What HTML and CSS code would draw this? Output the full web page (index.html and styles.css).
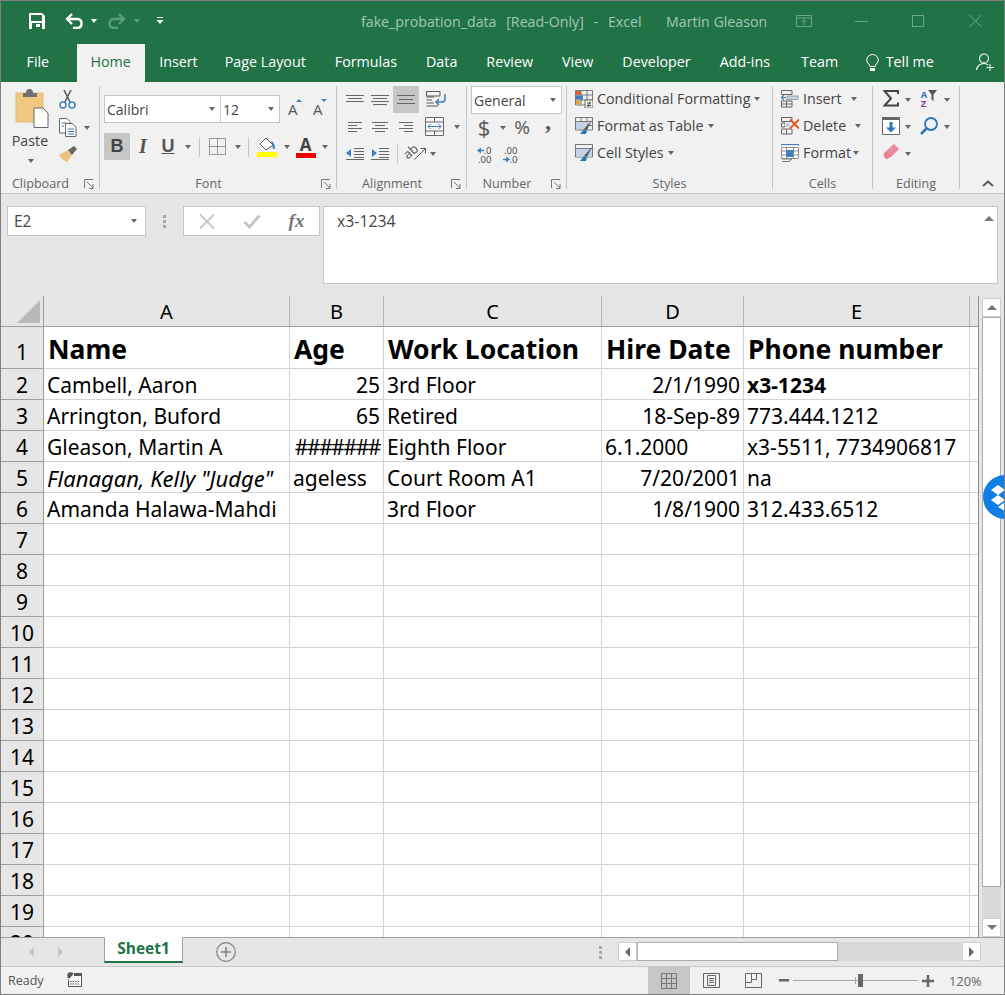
FILE: index.html
```html
<!DOCTYPE html>
<html lang="en">
<head>
<meta charset="utf-8">
<title>fake_probation_data - Excel</title>
<link rel="stylesheet" href="styles.css">
</head>
<body>
<div class="window">
  <header class="titlebar">
    <svg class="qat-save" width="16" height="16" viewBox="0 0 16 16"><path d="M0 0H13L16 3V16H0Z" fill="#fff"/><rect x="2" y="2" width="11" height="6" fill="#217346"/><rect x="3" y="10" width="10" height="6" fill="#217346"/><rect x="7" y="11" width="4" height="3" fill="#fff"/></svg>
    <svg class="qat-undo" width="18" height="16" viewBox="0 0 18 16"><path d="M7 1L2 6L7 11M2 6H12C15 6 16.500 8 16.500 10.500S15 15 12 15H8" fill="none" stroke="#fff" stroke-width="2.400"/></svg>
    <i class="arr arr-w qat-a1"></i>
    <svg class="qat-redo" width="18" height="16" viewBox="0 0 18 16"><path d="M11 1L16 6L11 11M16 6H6C3 6 1.500 8 1.500 10.500S3 15 6 15H10" fill="none" stroke="#5c9a7b" stroke-width="2.400"/></svg>
    <i class="arr arr-f qat-a2"></i>
    <svg class="qat-more" width="8" height="8" viewBox="0 0 8 8"><path d="M1 0.500H7" stroke="#fff"/><path d="M0.500 3H7.500L4 7Z" fill="#fff"/></svg>
    <span class="doc-title">fake_probation_data&nbsp; [Read-Only]&nbsp; -&nbsp; Excel</span>
    <span class="user">Martin Gleason</span>
    <svg class="win-display" width="16" height="12" viewBox="0 0 16 12"><path d="M.5.500H15.500V11.500H.5ZM.5 3H15.500M8 10V5M5.500 7L8 4.500L10.500 7" fill="none" stroke="#6ea58a"/></svg>
    <svg class="win-min" width="13" height="1" viewBox="0 0 13 1"><rect width="13" height="1" fill="#6ea58a"/></svg>
    <svg class="win-max" width="12" height="12" viewBox="0 0 12 12"><rect x=".5" y=".5" width="11" height="11" fill="none" stroke="#6ea58a"/></svg>
    <svg class="win-close" width="13" height="12" viewBox="0 0 13 12"><path d="M.5 0L12.500 12M12.500 0L.5 12" stroke="#6ea58a"/></svg>
  </header>

  <nav class="tabs">
    <span class="tab">File</span>
    <span class="tab tab-on">Home</span>
    <span class="tab tab-narrow">Insert</span>
    <span class="tab">Page Layout</span>
    <span class="tab">Formulas</span>
    <span class="tab">Data</span>
    <span class="tab">Review</span>
    <span class="tab">View</span>
    <span class="tab">Developer</span>
    <span class="tab tab-wide">Add-ins</span>
    <span class="tab">Team</span>
    <svg class="bulb" width="13" height="18" viewBox="0 0 13 18"><path d="M4 12.500C3.500 10 .7 9 .7 6A5.800 5.500 0 0 1 12.300 6C12.300 9 9.500 10 9 12.500Z" fill="none" stroke="#fff"/><rect x="4" y="14" width="5" height="3" fill="#fff"/></svg>
    <span class="tell">Tell me</span>
    <svg class="person" width="19" height="19" viewBox="0 0 19 19"><circle cx="8" cy="5.500" r="4.500" fill="none" stroke="#fff" stroke-width="1.200"/><path d="M.5 17C1.500 12 4 10.500 8 10.500C9.500 10.500 11 11 12 12" fill="none" stroke="#fff" stroke-width="1.200"/><path d="M14 11V18M10.500 14.500H18" stroke="#fff"/></svg>
  </nav>

  <section class="ribbon">
    <div class="group g-clip">
      <div class="body clip-body">
        <div class="paste">
          <svg width="35" height="40" viewBox="0 0 35 40"><path d="M2 4H29V33H2Z" fill="#efc882" stroke="#e8bd75"/><path d="M9 4H12C12 1 13 0 15.500 0S19 1 19 4H23V8H9Z" fill="#707070"/><path d="M20 19H29L34 24V38.500H20Z" fill="#fff" stroke="#666"/></svg>
          <span class="paste-t">Paste</span>
          <i class="arr"></i>
        </div>
        <div class="clip-small">
          <svg width="17" height="19" viewBox="0 0 17 19"><path d="M5 0L11 12M12 0L6 12" stroke="#555" stroke-width="1.500" fill="none"/><circle cx="4" cy="15" r="3" fill="#fff" stroke="#3f7fbf" stroke-width="1.500"/><circle cx="13" cy="15" r="3" fill="#fff" stroke="#3f7fbf" stroke-width="1.500"/></svg>
          <span class="copy-row"><svg width="18" height="19" viewBox="0 0 18 19"><path d="M.5.5H8L11 3.500V15H.5Z" fill="#fff" stroke="#666"/><path d="M6.500 5.500H13L17 9V18.500H6.500Z" fill="#fff" stroke="#666"/><path d="M2.500 5H8M2.500 8H5M8.500 11H15M8.500 13.500H15M8.500 16H15" stroke="#3f7fbf"/></svg><i class="arr copy-a"></i></span>
          <svg width="18" height="17" viewBox="0 0 18 17"><path d="M0 9L9 4L13 9L8 16L3 13Z" fill="#efc07d"/><path d="M9 4L15 0L18 3L13 9Z" fill="#666"/></svg>
        </div>
      </div>
      <div class="label"><span>Clipboard</span><svg class="launch" width="10" height="10" viewBox="0 0 10 10"><path d="M.5 9V.5H9M3 3L9 9M9 5V9.500H5" fill="none" stroke="#777"/></svg></div>
    </div>

    <div class="group g-font">
      <div class="body font-body">
        <div class="font-r1">
          <div class="combo"><span>Calibri</span><i class="arr"></i></div>
          <div class="combo combo-size"><span>12</span><i class="arr"></i></div>
          <span class="gs gs-grow">A<i class="mini mini-up"></i></span>
          <span class="gs gs-shrink">A<i class="mini mini-down"></i></span>
        </div>
        <div class="font-r2">
          <b class="btn btn-on">B</b>
          <em class="btn btn-i">I</em>
          <u class="btn btn-u">U</u>
          <i class="arr"></i>
          <span class="vsep"></span>
          <svg width="17" height="17" viewBox="0 0 17 17"><path d="M.5.5H16.500V16.500H.5ZM8.500.5V16.500M.5 8.500H16.500" fill="none" stroke="#444" stroke-dasharray="1 1"/></svg>
          <i class="arr"></i>
          <span class="vsep"></span>
          <svg width="20" height="20" viewBox="0 0 20 20"><path d="M9 1L16 8L9 13L3 7Z" fill="#fff" stroke="#555"/><path d="M14 4C17 5 18 8 18 12H16L15 7Z" fill="#3f7fbf"/><rect y="15" width="20" height="5" fill="#ffff00"/></svg>
          <i class="arr"></i>
          <span class="fc"><span class="fc-a">A</span><i class="fc-bar"></i></span>
          <i class="arr"></i>
        </div>
      </div>
      <div class="label"><span>Font</span><svg class="launch" width="10" height="10" viewBox="0 0 10 10"><path d="M.5 9V.5H9M3 3L9 9M9 5V9.500H5" fill="none" stroke="#777"/></svg></div>
    </div>

    <div class="group g-align">
      <div class="body align-body">
        <div class="al-r1">
          <svg width="18" height="10" viewBox="0 0 18 10"><path d="M0 .5H18M2 3.500H16M0 6.500H18" stroke="#666"/></svg>
          <svg width="18" height="10" viewBox="0 0 18 10"><path d="M0 .5H18M2 3.500H16M0 6.500H18M2 9.500H16" stroke="#666"/></svg>
          <span class="al-on"><svg width="18" height="11" viewBox="0 0 18 11"><path d="M0 1.500H18M2 5.500H16M0 9.500H18" stroke="#666"/></svg></span>
          <svg width="20" height="18" viewBox="0 0 20 18"><path d="M.5.5H14V5H.5ZM.5 6H8M.5 9H6M.5 12H8M.5 15H12" fill="none" stroke="#555"/><path d="M19 3V8C19 10 18 11 16 11H10M13 8L10 11L13 14" fill="none" stroke="#3f7fbf" stroke-width="1.500"/></svg>
        </div>
        <div class="al-r2">
          <svg width="14" height="10" viewBox="0 0 14 10"><path d="M0 .5H14M0 3.500H9M0 6.500H14M0 9.500H9" stroke="#666"/></svg>
          <svg width="16" height="10" viewBox="0 0 16 10"><path d="M0 .5H16M3 3.500H13M0 6.500H16M3 9.500H13" stroke="#666"/></svg>
          <svg width="14" height="10" viewBox="0 0 14 10"><path d="M0 .5H14M5 3.500H14M0 6.500H14M5 9.500H14" stroke="#666"/></svg>
          <svg width="19" height="19" viewBox="0 0 19 19"><path d="M.5.5H18.500V18.500H.5ZM.5 5H18.500M.5 14H18.500M9.500.5V5M9.500 14V18.500" fill="#f7f7f7" stroke="#666"/><path d="M3 9.500H16M5.500 7L3 9.500L5.500 12M13.500 7L16 9.500L13.500 12" fill="none" stroke="#3f7fbf"/></svg>
          <i class="arr"></i>
        </div>
        <div class="al-r3">
          <svg width="18" height="12" viewBox="0 0 18 12"><path d="M8 .5H18M8 3.500H18M8 6.500H18M8 9.500H18M0 11.500H18" stroke="#666" fill="none"/><path d="M0 5L5 1V9Z" fill="#3f7fbf"/></svg>
          <svg width="18" height="12" viewBox="0 0 18 12"><path d="M8 .5H18M8 3.500H18M8 6.500H18M8 9.500H18M0 11.500H18" stroke="#666" fill="none"/><path d="M6 5L1 1V9Z" fill="#3f7fbf"/></svg>
          <span class="vsep"></span>
          <span class="orient"><span class="ab">ab</span><svg width="12" height="13" viewBox="0 0 12 13"><path d="M.5 12.500L11 2M6.500 1.500H11.500V6.500" fill="none" stroke="#555"/></svg></span>
          <i class="arr"></i>
        </div>
      </div>
      <div class="label"><span>Alignment</span><svg class="launch" width="10" height="10" viewBox="0 0 10 10"><path d="M.5 9V.5H9M3 3L9 9M9 5V9.500H5" fill="none" stroke="#777"/></svg></div>
    </div>

    <div class="group g-num">
      <div class="body num-body">
        <div class="combo combo-num"><span>General</span><i class="arr"></i></div>
        <div class="num-r2">
          <span class="num-d">$</span>
          <i class="arr"></i>
          <span class="num-p">%</span>
          <b class="num-comma">,</b>
        </div>
        <div class="num-r3">
          <span class="dec"><span class="dec-l"><svg width="7" height="7" viewBox="0 0 7 7"><path d="M0 3.500L4 .5V6.500Z" fill="#3f7fbf"/><path d="M3 3.500H7" stroke="#3f7fbf" stroke-width="1.500"/></svg>.0</span><span class="dec-l">.00</span></span>
          <span class="dec"><span class="dec-l">.00</span><span class="dec-l"><svg width="7" height="7" viewBox="0 0 7 7"><path d="M0 3.500H4" stroke="#3f7fbf" stroke-width="1.500"/><path d="M7 3.500L3 .5V6.500Z" fill="#3f7fbf"/></svg>.0</span></span>
        </div>
      </div>
      <div class="label"><span>Number</span><svg class="launch" width="10" height="10" viewBox="0 0 10 10"><path d="M.5 9V.5H9M3 3L9 9M9 5V9.500H5" fill="none" stroke="#777"/></svg></div>
    </div>

    <div class="group g-styles">
      <div class="body list-body">
        <div class="li"><svg width="18" height="18" viewBox="0 0 18 18"><path d="M.5.5H17.500V15H.5ZM6 .5V15M12 .5V15M.5 5H17.500M.5 10H17.500" fill="none" stroke="#777"/><rect x="1" y="1" width="5" height="4" fill="#d95f3b"/><rect x="1" y="5.500" width="7" height="4" fill="#3f7fbf"/><rect x="1" y="10.500" width="4" height="4" fill="#e9a13a"/><rect x="10" y="10" width="8" height="8" fill="#f7f7f7" stroke="#666"/><path d="M12 13H16M12 15.500H16M15 12L13 17" stroke="#444"/></svg><span>Conditional Formatting</span><i class="arr"></i></div>
        <div class="li"><svg width="18" height="18" viewBox="0 0 18 18"><path d="M.5.5H17.500V13H.5ZM6 .5V13M12 .5V13M.5 4.500H17.500M.5 8.500H17.500" fill="none" stroke="#777"/><rect x="1" y="5" width="11" height="7" fill="#c3d3e6"/><path d="M17 3L9 12L12 13Z" fill="#555"/><path d="M9 12L5 17H11L12 14Z" fill="#2f75b5"/></svg><span>Format as Table</span><i class="arr"></i></div>
        <div class="li"><svg width="18" height="18" viewBox="0 0 18 18"><path d="M.5.5H17.500V13H.5Z" fill="none" stroke="#777"/><path d="M.5 4.500H17.500" stroke="#777"/><rect x="1" y="5" width="16" height="8" fill="#c3d3e6"/><path d="M17 3L9 12L12 13Z" fill="#555"/><path d="M9 12L5 17H11L12 14Z" fill="#2f75b5"/></svg><span>Cell Styles</span><i class="arr"></i></div>
      </div>
      <div class="label label-plain"><span>Styles</span></div>
    </div>

    <div class="group g-cells">
      <div class="body list-body">
        <div class="li"><svg width="18" height="18" viewBox="0 0 18 18"><path d="M.5.5H11V4.500H.5ZM.5 11H11V17H.5ZM5.500 11V17M.5 14H11" fill="none" stroke="#666"/><rect x="6" y="6" width="11" height="3.500" fill="#c3d3e6" stroke="#777" stroke-width=".6"/><path d="M0 7.500H5M3 5L.5 7.500L3 10" fill="none" stroke="#3f7fbf" stroke-width="1.200"/></svg><span>Insert</span><i class="arr a-far"></i></div>
        <div class="li"><svg width="18" height="18" viewBox="0 0 18 18"><path d="M.5.5H11V4.500H.5ZM.5 12H11V17H.5ZM5.500 12V17M.5 6H4V10H.5Z" fill="none" stroke="#666"/><rect x="4" y="6" width="5" height="4" fill="#c3d3e6"/><path d="M9 2.500L18 11.500M18 2.500L9 11.500" stroke="#e2582c" stroke-width="2"/></svg><span>Delete</span><i class="arr a-far"></i></div>
        <div class="li"><svg width="18" height="18" viewBox="0 0 18 18"><path d="M0 .5H18M.5 0V1.500M17.500 0V1.500" stroke="#3f7fbf"/><path d="M.5 3.500H17.500V14.500H.5ZM5.500 3.500V14.500M12.500 3.500V14.500M.5 7H17.500M.5 11H17.500" fill="#fff" stroke="#777" stroke-width=".8"/><rect x="5" y="6" width="7" height="7" fill="#3f7fbf"/><path d="M1 15H11L8 17.500H1" fill="none" stroke="#777"/></svg><span>Format</span><i class="arr a-near"></i></div>
      </div>
      <div class="label label-plain"><span>Cells</span></div>
    </div>

    <div class="group g-edit">
      <div class="body edit-body">
        <svg width="16" height="17" viewBox="0 0 16 17"><path d="M15 4V1H1.500L8 8.500L1.500 15.500H15V12.500" fill="none" stroke="#444" stroke-width="2"/></svg>
        <i class="arr"></i>
        <span class="az"><span class="az-col"><b class="az-a">A</b><b class="az-z">Z</b></span><svg width="9" height="11" viewBox="0 0 9 11"><path d="M0 0H9L5.500 4.500V11L3.500 9.500V4.500Z" fill="#555"/></svg></span>
        <i class="arr"></i>
        <svg width="18" height="18" viewBox="0 0 18 18"><path d="M.5.5H17.500V17.500H.5Z" fill="#fff" stroke="#666"/><path d="M0 .5H18V3H0Z" fill="#666"/><path d="M9 5V12" stroke="#2f75b5" stroke-width="3"/><path d="M4 10.500H14L9 15.500Z" fill="#2f75b5"/></svg>
        <i class="arr"></i>
        <svg width="18" height="18" viewBox="0 0 18 18"><circle cx="11" cy="7" r="6" fill="none" stroke="#2f75b5" stroke-width="1.800"/><path d="M7 11L1 17" stroke="#2f75b5" stroke-width="2.500"/></svg>
        <i class="arr"></i>
        <svg width="16" height="16" viewBox="0 0 16 16"><path d="M11 0L16 5L8 13H5L1 9Z" fill="#ea8a9c"/><path d="M3 8L1 10C0 11 1 13 3 15H5L8 12Z" fill="#e9808f"/></svg>
        <i class="arr"></i>
      </div>
      <div class="label label-plain"><span>Editing</span></div>
    </div>

    <div class="collapse"><svg width="12" height="7" viewBox="0 0 12 7"><path d="M1 6L6 1.500L11 6" fill="none" stroke="#555" stroke-width="1.800"/></svg></div>
  </section>

  <section class="formula">
    <div class="namebox"><span>E2</span><i class="arr"></i></div>
    <div class="dots"><i></i><i></i><i></i></div>
    <div class="fxbox">
      <svg width="16" height="15" viewBox="0 0 16 15"><path d="M1 .5L15 14.500M15 .5L1 14.500" stroke="#c6c6c6" stroke-width="1.800"/></svg>
      <svg width="18" height="15" viewBox="0 0 18 15"><path d="M1.500 8L6.500 13L16.500 1.500" fill="none" stroke="#c6c6c6" stroke-width="3"/></svg>
      <span class="fx">fx</span>
    </div>
    <div class="finput"><span>x3-1234</span><i class="tri tri-up f-up"></i></div>
  </section>

  <main class="work">
    <div class="sheet">
      <div class="h corner"><svg width="23" height="23" viewBox="0 0 23 23"><path d="M23 0V23H0Z" fill="#b9b9b9"/></svg></div>
      <div class="h ch">A</div><div class="h ch">B</div><div class="h ch">C</div><div class="h ch">D</div><div class="h ch">E</div><div class="h ch ch-end"></div>

      <div class="rh rh-1">1</div><div class="c big">Name</div><div class="c big">Age</div><div class="c big">Work Location</div><div class="c big">Hire Date</div><div class="c big">Phone number</div><div class="c x"></div>
      <div class="rh">2</div><div class="c">Cambell, Aaron</div><div class="c r">25</div><div class="c">3rd Floor</div><div class="c r">2/1/1990</div><div class="c bold">x3-1234</div><div class="c x"></div>
      <div class="rh">3</div><div class="c">Arrington, Buford</div><div class="c r">65</div><div class="c">Retired</div><div class="c r">18-Sep-89</div><div class="c">773.444.1212</div><div class="c x"></div>
      <div class="rh">4</div><div class="c">Gleason, Martin A</div><div class="c r hash">#######</div><div class="c">Eighth Floor</div><div class="c">6.1.2000</div><div class="c">x3-5511, 7734906817</div><div class="c x"></div>
      <div class="rh">5</div><div class="c it">Flanagan, Kelly "Judge"</div><div class="c">ageless</div><div class="c">Court Room A1</div><div class="c r">7/20/2001</div><div class="c">na</div><div class="c x"></div>
      <div class="rh">6</div><div class="c">Amanda Halawa-Mahdi</div><div class="c"></div><div class="c">3rd Floor</div><div class="c r">1/8/1900</div><div class="c">312.433.6512</div><div class="c x"></div>
      <div class="rh">7</div><div class="c"></div><div class="c"></div><div class="c"></div><div class="c"></div><div class="c"></div><div class="c x"></div>
      <div class="rh">8</div><div class="c"></div><div class="c"></div><div class="c"></div><div class="c"></div><div class="c"></div><div class="c x"></div>
      <div class="rh">9</div><div class="c"></div><div class="c"></div><div class="c"></div><div class="c"></div><div class="c"></div><div class="c x"></div>
      <div class="rh">10</div><div class="c"></div><div class="c"></div><div class="c"></div><div class="c"></div><div class="c"></div><div class="c x"></div>
      <div class="rh">11</div><div class="c"></div><div class="c"></div><div class="c"></div><div class="c"></div><div class="c"></div><div class="c x"></div>
      <div class="rh">12</div><div class="c"></div><div class="c"></div><div class="c"></div><div class="c"></div><div class="c"></div><div class="c x"></div>
      <div class="rh">13</div><div class="c"></div><div class="c"></div><div class="c"></div><div class="c"></div><div class="c"></div><div class="c x"></div>
      <div class="rh">14</div><div class="c"></div><div class="c"></div><div class="c"></div><div class="c"></div><div class="c"></div><div class="c x"></div>
      <div class="rh">15</div><div class="c"></div><div class="c"></div><div class="c"></div><div class="c"></div><div class="c"></div><div class="c x"></div>
      <div class="rh">16</div><div class="c"></div><div class="c"></div><div class="c"></div><div class="c"></div><div class="c"></div><div class="c x"></div>
      <div class="rh">17</div><div class="c"></div><div class="c"></div><div class="c"></div><div class="c"></div><div class="c"></div><div class="c x"></div>
      <div class="rh">18</div><div class="c"></div><div class="c"></div><div class="c"></div><div class="c"></div><div class="c"></div><div class="c x"></div>
      <div class="rh">19</div><div class="c"></div><div class="c"></div><div class="c"></div><div class="c"></div><div class="c"></div><div class="c x"></div>
      <div class="rh">20</div><div class="c"></div><div class="c"></div><div class="c"></div><div class="c"></div><div class="c"></div><div class="c x"></div>
    </div>
    <div class="vscroll">
      <div class="sbtn"><i class="tri tri-up"></i></div>
      <div class="vthumb"></div>
      <div class="vtrack"></div>
      <div class="sbtn"><i class="tri tri-down"></i></div>
    </div>
  </main>

  <div class="tabbar">
    <div class="sheet-nav"><i class="tri tri-left tri-off"></i><i class="tri tri-right tri-off"></i></div>
    <div class="sheet-tab">Sheet1</div>
    <svg class="add" width="20" height="20" viewBox="0 0 20 20"><circle cx="10" cy="10" r="9.300" fill="none" stroke="#7f7f7f" stroke-width="1.200"/><path d="M10 5V15M5 10H15" stroke="#7f7f7f" stroke-width="1.600"/></svg>
    <div class="dots dots-tab"><i></i><i></i><i></i></div>
    <div class="hscroll">
      <div class="hbtn"><i class="tri tri-left"></i></div>
      <div class="hthumb"></div>
      <div class="htrack"></div>
      <div class="hbtn"><i class="tri tri-right"></i></div>
    </div>
  </div>

  <footer class="status">
    <span class="ready">Ready</span>
    <svg class="macro" width="15" height="15" viewBox="0 0 15 15"><circle cx="3.500" cy="3.500" r="3.200" fill="#555"/><path d="M7 1.500H14.500V14.500H1.500V7.500" fill="#f7f7f7" stroke="#555"/><path d="M3 9.500H13M3 12H13" stroke="#555" stroke-dasharray="1.500 1"/><rect x="7" y="1.500" width="8" height="2.500" fill="#555"/></svg>
    <div class="view view-on"><svg width="16" height="16" viewBox="0 0 16 16"><path d="M.5.5H15.500V15.500H.5ZM5.500.5V15.500M10.500.5V15.500M.5 5.500H15.500M.5 10.500H15.500" fill="none" stroke="#777"/></svg></div>
    <div class="view"><svg width="17" height="15" viewBox="0 0 17 15"><path d="M.5.5H16.500V14.500H.5Z" fill="none" stroke="#666"/><path d="M4.500 2.500H12.500V12.500H4.500ZM6 5.500H11M6 7.500H11M6 9.500H11" fill="none" stroke="#666"/></svg></div>
    <div class="view"><svg width="17" height="15" viewBox="0 0 17 15"><path d="M.5.5H16.500V14.500H.5ZM.5 9.500H6.500V.5M6.500 6.500H11.500V.5" fill="none" stroke="#666"/></svg></div>
    <svg class="z-minus" width="10" height="3" viewBox="0 0 10 3"><rect width="10" height="2.500" fill="#666"/></svg>
    <div class="slider"><i class="tick"></i><i class="knob"></i></div>
    <svg class="z-plus" width="12" height="12" viewBox="0 0 12 12"><path d="M0 6H12M6 0V12" stroke="#666" stroke-width="2.500"/></svg>
    <span class="pct">120%</span>
  </footer>

  <aside class="dropbox"><svg width="22" height="28" viewBox="0 0 22 28"><path d="M1 7L8 2L15 7L8 12ZM16 7L22 3V11ZM1 17L8 12L15 17L8 22ZM16 17L22 13V21ZM8 24L15 19L22 24L15 28Z" fill="#fff"/></svg></aside>
</div>
</body>
</html>
```
FILE: styles.css
```css
* { box-sizing: border-box; }
html, body { margin: 0; padding: 0; }
body { font-family: "Open Sans", "Noto Sans", "Liberation Sans", sans-serif; background: #fff; overflow: hidden; }
svg { display: block; flex: none; }
i { display: block; }

.window { position: relative; width: 1005px; height: 995px; border: 1px solid #7f7f7f; overflow: hidden; display: flex; flex-direction: column; background: #e6e6e6; }

.arr { width: 0; height: 0; border-left: 3.500px solid transparent; border-right: 3.500px solid transparent; border-top: 4px solid #666; justify-self: center; flex: none; }
.arr-w { border-top-color: #fff; }
.arr-f { border-top-color: #5c9a7b; }

/* title bar */
.titlebar { height: 40px; background: #217346; display: flex; align-items: center; flex: none; }
.qat-save { margin-left: 28px; }
.qat-undo { margin-left: 20px; }
.qat-a1 { margin-left: 8px; }
.qat-redo { margin-left: 11px; }
.qat-a2 { margin-left: 8px; }
.qat-more { margin-left: 16px; }
.doc-title { margin-left: 197px; font-size: 14.200px; word-spacing: 1.200px; color: #a3c6b4; white-space: nowrap; width: 305px; }
.user { font-size: 14.200px; color: #a3c6b4; white-space: nowrap; width: 130px; }
.win-min { margin-left: 43px; }
.win-max { margin-left: 44px; }
.win-close { margin-left: 45px; }

/* tabs */
.tabs { height: 41px; background: #217346; display: flex; align-items: flex-end; padding-left: 11px; flex: none; }
.tab { height: 38px; padding: 0 14.500px; line-height: 36px; font-size: 14.300px; color: #fff; white-space: nowrap; flex: none; }
.tab-on { width: 68px; margin-left: 13px; background: #f1f1f1; color: #217346; padding: 0; text-align: center; }
.tab-narrow { padding-right: 12.500px; }
.tab-wide { padding-right: 16.500px; }
.bulb { margin: 0 7px 10px 13px; }
.tell { height: 38px; line-height: 36px; font-size: 14.300px; color: #fff; white-space: nowrap; }
.person { margin: 0 9px 10px auto; }

/* ribbon */
.ribbon { height: 112px; background: #f1f1f1; border-bottom: 1px solid #c6c6c6; display: flex; flex: none; color: #444; }
.group { margin-top: 4px; height: 103px; border-right: 1px solid #c6c6c6; display: flex; flex-direction: column; flex: none; }
.g-clip { width: 99px; }
.g-font { width: 237px; }
.g-align { width: 130px; }
.g-num { width: 100px; }
.g-styles { width: 206px; }
.g-cells { width: 100px; }
.g-edit { width: 87px; }
.body { height: 91px; flex: none; }
.label { height: 13px; display: flex; align-items: center; font-size: 12.600px; color: #666; padding-right: 5px; }
.label-plain { padding-right: 0; }
.label span { flex: 1; text-align: center; white-space: nowrap; }
.launch { margin-left: 4px; }
.collapse { flex: 1; display: flex; justify-content: flex-end; align-items: flex-end; padding: 0 10px 6px 0; }

.clip-body { display: flex; padding-left: 11px; gap: 9px; }
.paste { width: 38px; display: flex; flex-direction: column; align-items: center; padding-top: 3px; }
.paste-t { font-size: 14.300px; line-height: 20px; margin: 2px 2px 0 0; color: #444; }
.paste .arr { margin-top: 8px; }
.clip-small { padding-top: 4px; display: flex; flex-direction: column; gap: 9px; }
.copy-row { display: flex; align-items: center; }
.copy-a { margin-left: 7px; }

.font-body { padding: 9px 0 0 4px; }
.font-r1 { display: grid; grid-template-columns: 117px 59px 23px 25px; height: 28px; align-items: center; }
.gs { display: flex; align-items: flex-start; font-size: 15px; line-height: 28px; color: #555; height: 28px; }
.gs-grow { padding-left: 8px; }
.gs-shrink { padding-left: 10px; }
.mini { width: 0; height: 0; border-left: 3px solid transparent; border-right: 3px solid transparent; margin: 4px 0 0 -2px; }
.mini-up { border-bottom: 3px solid #3f7fbf; }
.mini-down { border-top: 3px solid #3f7fbf; }
.combo { height: 28px; background: #fff; border: 1px solid #c6c6c6; display: flex; align-items: center; justify-content: space-between; padding: 0 5px 0 2px; font-size: 14px; color: #444; }
.combo-size { border-left: 0; }
.font-r2 { margin-top: 10px; display: grid; grid-template-columns: 26px 26px 24px 16px 7px 29px 12px 8px 30px 9px 29px 10px; height: 27px; align-items: center; justify-items: center; }
.btn { display: block; font-size: 18px; font-weight: 700; color: #555; text-align: center; font-family: "Liberation Sans", sans-serif; }
.btn-i { font-family: "Liberation Serif", serif; font-size: 20px; }
.btn-on { width: 26px; height: 27px; line-height: 27px; background: #c6c6c6; color: #444; }
.vsep { display: block; width: 1px; height: 20px; background: #c6c6c6; }
.fc { display: flex; flex-direction: column; align-items: center; width: 20px; }
.fc-a { font-size: 17px; font-weight: 700; line-height: 17px; color: #444; }
.fc-bar { width: 20px; height: 5px; background: #f00000; }

.align-body { padding-left: 5px; }
.al-r1, .al-r2, .al-r3 { height: 27px; display: grid; align-items: center; justify-items: center; }
.al-r1 { grid-template-columns: 25px 26px 26px 33px; }
.al-r2 { grid-template-columns: 25px 26px 26px 30px 16px; }
.al-r3 { grid-template-columns: 25px 26px 8px 27px 10px; }
.al-on { width: 26px; height: 27px; background: #c6c6c6; display: flex; align-items: center; justify-content: center; }
.orient { display: flex; align-items: center; }
.ab { display: block; font-size: 13px; line-height: 13px; color: #555; transform: rotate(-40deg); margin: 0 -5px 5px 0; }

.num-body { padding-left: 4px; }
.combo-num { width: 91px; }
.num-r2 { height: 27px; display: grid; grid-template-columns: 26px 12px 26px 26px; align-items: center; justify-items: center; }
.num-d { font-size: 22px; color: #555; line-height: 27px; }
.num-p { font-size: 19px; color: #555; line-height: 27px; }
.num-comma { font-size: 24px; color: #555; line-height: 20px; transform: translateY(-7px); font-family: "Liberation Serif", serif; }
.num-r3 { height: 27px; display: grid; grid-template-columns: 26px 26px; align-items: center; justify-items: center; }
.dec { display: flex; flex-direction: column; align-items: flex-end; font-size: 9.500px; line-height: 9px; color: #444; }
.dec-l { display: flex; align-items: center; }

.list-body { height: 92px; padding: 0 0 0 8px; margin-top: -1px; }
.li { height: 27px; display: flex; align-items: center; font-size: 14.300px; color: #444; white-space: nowrap; }
.li span { margin-left: 4px; }
.li .arr { margin-left: 4px; }
.li .a-far { margin-left: 9px; }
.li .a-near { margin-left: 2px; }

.edit-body { padding: 4px 0 0 8px; display: grid; grid-template-columns: 19px 15px 28px 8px; grid-auto-rows: 27px; align-items: start; justify-items: center; }
.edit-body .arr { margin-top: 8px; }
.az { display: flex; align-items: flex-start; }
.az-col { display: flex; flex-direction: column; font-size: 9.500px; line-height: 9px; margin-right: 1px; }
.az-a { color: #2f75b5; }
.az-z { color: #7e3fb5; }

/* formula bar */
.formula { height: 102px; flex: none; display: flex; align-items: flex-start; padding: 12px 0 0 6px; background: #e6e6e6; }
.namebox { width: 139px; height: 30px; background: #fff; border: 1px solid #c6c6c6; display: flex; align-items: center; justify-content: space-between; padding: 0 8px 0 6px; font-size: 15.500px; color: #444; }
.dots { width: 37px; height: 30px; display: flex; flex-direction: column; align-items: center; justify-content: center; gap: 2px; }
.dots i { width: 3px; height: 3px; background: #a6a6a6; }
.fxbox { width: 137px; height: 30px; background: #fff; border: 1px solid #c6c6c6; display: grid; grid-template-columns: 45px 45px 45px; align-items: center; justify-items: center; }
.fx { font-family: "Liberation Serif", serif; font-style: italic; font-weight: 700; font-size: 19px; color: #777; line-height: 28px; }
.finput { width: 675px; height: 78px; margin-left: 3px; background: #fff; border: 1px solid #c6c6c6; display: flex; justify-content: space-between; padding: 3px 3px 0 13px; font-size: 15.800px; color: #444; }
.f-up { margin-top: 6px; }

/* sheet */
.work { height: 641px; flex: none; display: flex; background: #e6e6e6; }
.sheet { width: 978px; height: 641px; flex: none; overflow: hidden; background: #fff; border-right: 1px solid #8f8f8f; display: grid; grid-template-columns: 43px 246px 94px 218px 142px 226px 8px; grid-template-rows: 31px 42px; grid-auto-rows: 31px; font-family: "Noto Sans", "Open Sans", sans-serif; font-size: 21px; color: #000; }
.h { background: #e6e6e6; border-bottom: 1px solid #9f9f9f; border-right: 1px solid #b5b5b5; display: flex; align-items: center; justify-content: center; padding-top: 2px; line-height: 28px; font-size: 20px; }
.corner { border-right-color: #9f9f9f; padding: 4px 3px 3px 16px; }
.ch-end { border-right: 0; }
.rh { background: #e6e6e6; border-bottom: 1px solid #9f9f9f; border-right: 1px solid #9f9f9f; display: flex; align-items: flex-end; justify-content: center; line-height: 28px; }
.rh-1 { padding-bottom: 2px; }
.c { background: #fff; border-bottom: 1px solid #d4d4d4; border-right: 1px solid #d4d4d4; padding: 0 3px; line-height: 32px; white-space: nowrap; }
.big { font-size: 26.500px; font-weight: 700; line-height: 44px; padding-left: 4px; }
.r { text-align: right; }
.hash { letter-spacing: -1.400px; }
.bold { font-weight: 700; }
.it { font-style: italic; font-size: 22px; }
.x { border-right: 0; }

/* vertical scrollbar */
.vscroll { width: 19px; margin-left: 3px; padding-top: 2px; display: flex; flex-direction: column; }
.sbtn { width: 19px; height: 19px; flex: none; background: #fff; border: 1px solid #d0d0d0; display: flex; align-items: center; justify-content: center; }
.vthumb { height: 570px; flex: none; background: #fff; border: 1px solid #ababab; }
.vtrack { flex: 1; background: #d9d9d9; }
.tri { width: 0; height: 0; flex: none; }
.tri-up { border-left: 5px solid transparent; border-right: 5px solid transparent; border-bottom: 5px solid #777; }
.tri-down { border-left: 5px solid transparent; border-right: 5px solid transparent; border-top: 5px solid #777; }
.tri-left { border-top: 5px solid transparent; border-bottom: 5px solid transparent; border-right: 5px solid #666; }
.tri-right { border-top: 5px solid transparent; border-bottom: 5px solid transparent; border-left: 5px solid #666; }
.tri-off.tri-left { border-right-color: #c6c6c6; }
.tri-off.tri-right { border-left-color: #c6c6c6; }

/* sheet tabs */
.tabbar { height: 29px; flex: none; background: #e6e6e6; border-top: 1px solid #9f9f9f; display: flex; align-items: flex-start; }
.sheet-nav { width: 103px; flex: none; display: flex; padding: 9px 0 0 28px; gap: 24px; }
.sheet-tab { width: 79px; height: 26px; flex: none; margin-top: -1px; background: #fff; border: 1px solid #9f9f9f; border-top-color: #fff; border-bottom: 2px solid #217346; color: #217346; font-weight: 700; font-size: 15.500px; line-height: 20px; text-align: center; }
.add { margin: 4px 0 0 33px; }
.dots-tab { margin: 5px 0 0 346px; height: 18px; width: 36px; }
.hscroll { width: 363px; height: 19px; margin-top: 4px; display: flex; }
.hbtn { width: 19px; flex: none; background: #fff; border: 1px solid #d0d0d0; display: flex; align-items: center; justify-content: center; }
.hthumb { width: 201px; flex: none; background: #fff; border: 1px solid #ababab; }
.htrack { flex: 1; background: #d9d9d9; }

/* status bar */
.status { flex: 1; background: #f1f1f1; border-top: 1px solid #c6c6c6; display: flex; align-items: center; }
.ready { margin-left: 7px; width: 59px; font-size: 12.500px; color: #555; }
.macro { margin-bottom: 2px; }
.view { width: 42px; height: 100%; display: flex; align-items: center; justify-content: center; }
.view-on { margin-left: 566px; background: #c6c6c6; }
.z-minus { margin-left: 5px; }
.slider { position: relative; width: 125px; height: 1px; margin-left: 4px; background: #a6a6a6; }
.tick { position: absolute; left: 62px; top: -3px; width: 1px; height: 7px; background: #a6a6a6; }
.knob { position: absolute; left: 65px; top: -6px; width: 5px; height: 13px; background: #666; }
.z-plus { margin-left: 4px; }
.pct { margin-left: 15px; font-size: 12.800px; color: #666; }

.dropbox { position: absolute; left: 982px; top: 474px; width: 44px; height: 44px; border-radius: 50%; background: #0f7fe6; padding: 8px 0 0 7px; }
```
